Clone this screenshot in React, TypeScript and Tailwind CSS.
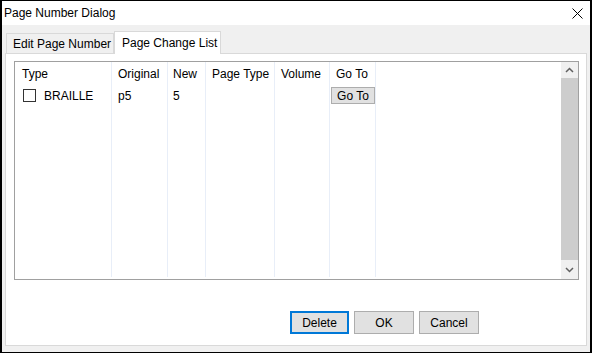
import { ReactNode } from "react";

type Column = {
  className: string;
  headClassName: string;
  head: string;
  cell?: ReactNode;
};

const columns: Column[] = [
  {
    className: "w-[97px]",
    headClassName: "pl-[7px]",
    head: "Type",
    cell: (
      <div className="flex items-center pl-[8px]">
        <span className="w-[13px] h-[13px] border border-[#333] bg-white" />
        <span className="ml-[8px]">BRAILLE</span>
      </div>
    ),
  },
  { className: "w-[56px]", headClassName: "pl-[6px]", head: "Original", cell: <span className="pl-[6px]">p5</span> },
  { className: "w-[38px]", headClassName: "pl-[5px]", head: "New", cell: <span className="pl-[5px]">5</span> },
  { className: "w-[69px]", headClassName: "pl-[6px]", head: "Page Type" },
  { className: "w-[55px]", headClassName: "pl-[6px]", head: "Volume" },
  {
    className: "w-[46px]",
    headClassName: "pl-[6px]",
    head: "Go To",
    cell: (
      <button className="ml-[1px] w-[44px] h-[17px] bg-[#e1e1e1] border border-[#adadad] leading-none">
        Go To
      </button>
    ),
  },
];

const Chevron = ({ up }: { up?: boolean }) => (
  <svg width="9" height="6" viewBox="0 0 9 6" className={up ? "" : "rotate-180"}>
    <path d="M1 5 L4.5 1.5 L8 5" fill="none" stroke="#606060" strokeWidth="1.5" />
  </svg>
);

const DialogButton = ({ label, focused }: { label: string; focused?: boolean }) => (
  <button
    className={
      focused
        ? "w-[59px] h-[23px] bg-[#e1e1e1] border-2 border-[#0078d7] text-black"
        : "w-[60px] h-[23px] bg-[#e1e1e1] border border-[#adadad] text-black"
    }
  >
    {label}
  </button>
);

export default function App() {
  return (
    <div
      className="w-[592px] h-[353px] flex flex-col border-x-2 border-y border-black bg-[#f0f0f0] text-[12px] text-black"
      style={{ fontFamily: '"Liberation Sans", Arial, sans-serif' }}
    >
      {/* title bar */}
      <div className="h-[24px] bg-white flex items-center justify-between pl-[2px] pr-[7px] shrink-0">
        <span>Page Number Dialog</span>
        <svg width="11" height="11" viewBox="0 0 11 11">
          <path d="M0.5 0.5 L10.5 10.5 M10.5 0.5 L0.5 10.5" stroke="#000" strokeWidth="1" />
        </svg>
      </div>

      {/* tabs */}
      <div className="flex items-end h-[28px] pl-[4px] shrink-0">
        <div className="h-[20px] w-[108px] border border-b-0 border-[#d9d9d9] bg-[#f0f0f0] flex items-center pl-[6px]">
          Edit Page Number
        </div>
        <div className="h-[23px] w-[107px] -mb-px border border-b-0 border-[#d9d9d9] bg-white flex items-center pl-[7px] relative z-10">
          Page Change List
        </div>
      </div>

      {/* tab panel */}
      <div className="mx-[3px] mb-[6px] flex-1 border border-[#d9d9d9] bg-white flex flex-col pt-[7px] pl-[8px] pr-[7px]">
        <div className="h-[219px] border border-[#a0a0a0] flex">
          <div className="flex-1 flex">
            {columns.map((col) => (
              <div key={col.head} className={`${col.className} flex flex-col border-r border-[#e8eef8] mb-[2px]`}>
                <div className={`${col.headClassName} h-[24px] flex items-center`}>{col.head}</div>
                <div className="h-[19px] flex items-center">{col.cell}</div>
              </div>
            ))}
          </div>
          <div className="w-[17px] bg-[#f0f0f0] flex flex-col">
            <div className="h-[16px] flex items-center justify-center">
              <Chevron up />
            </div>
            <div className="flex-1 bg-[#cdcdcd]" />
            <div className="h-[19px] flex items-center justify-center">
              <Chevron />
            </div>
          </div>
        </div>

        <div className="flex gap-[5px] mt-[31px] ml-[276px]">
          <DialogButton label="Delete" focused />
          <DialogButton label="OK" />
          <DialogButton label="Cancel" />
        </div>
      </div>
    </div>
  );
}
